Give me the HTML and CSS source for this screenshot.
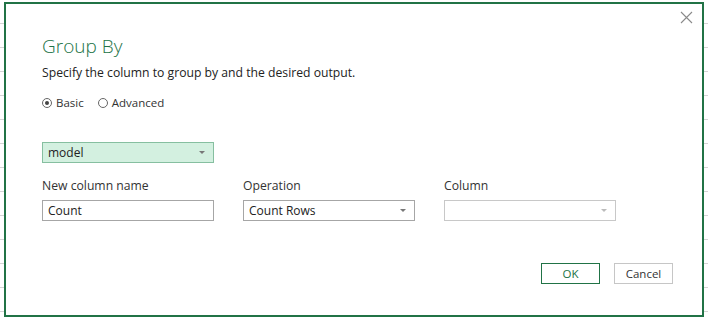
FILE: index.html
```html
<!DOCTYPE html>
<html lang="en">
<head>
    <meta charset="UTF-8">
    <title>Group By</title>
    <link rel="stylesheet" href="styles.css">
</head>
<body>
    <div class="sheet">
        <div class="dialog">
            <button class="close" aria-label="Close">
                <svg width="13" height="13" viewBox="0 0 13 13"><path d="M1 1L12 12M12 1L1 12" stroke="#8a8a8a" stroke-width="1.1" fill="none"/></svg>
            </button>
            <h1 class="title">Group By</h1>
            <p class="subtitle">Specify the column to group by and the desired output.</p>
            <div class="modes">
                <label class="radio"><span class="dot checked"></span>Basic</label>
                <label class="radio"><span class="dot"></span>Advanced</label>
            </div>

            <div class="select selected">
                <span>model</span>
                <span class="caret"></span>
            </div>

            <div class="fields">
                <div class="field">
                    <div class="label">New column name</div>
                    <div class="input">Count</div>
                </div>
                <div class="field">
                    <div class="label">Operation</div>
                    <div class="select">
                        <span>Count Rows</span>
                        <span class="caret"></span>
                    </div>
                </div>
                <div class="field">
                    <div class="label">Column</div>
                    <div class="select disabled">
                        <span></span>
                        <span class="caret"></span>
                    </div>
                </div>
            </div>

            <div class="actions">
                <button class="btn primary">OK</button>
                <button class="btn">Cancel</button>
            </div>
        </div>
    </div>
</body>
</html>
```

FILE: styles.css
```css
body {
    margin: 0;
    font-family: 'Open Sans', sans-serif;
    color: #333;
    background: #fff;
}
.sheet {
    height: 318px;
    padding: 2px 4px 0 4px;
    box-sizing: border-box;
    background:
        repeating-linear-gradient(to bottom, transparent 0, transparent 23px, #d4d4d4 23px, #d4d4d4 24px);
}
.dialog {
    position: relative;
    width: 700px;
    height: 315px;
    box-sizing: border-box;
    border: 2px solid #217346;
    background: #fff;
    padding: 29px 0 0 36px;
}
.close {
    position: absolute;
    top: 7px;
    right: 9px;
    border: none;
    background: none;
    padding: 0;
    width: 13px;
    height: 13px;
}
.close svg {
    display: block;
}
.title {
    margin: 0;
    font-weight: 300;
    font-size: 19px;
    line-height: 26px;
    color: #217346;
}
.subtitle {
    margin: 5px 0 0;
    font-size: 12.2px;
    line-height: 17px;
    color: #222;
}
.modes {
    display: flex;
    gap: 14px;
    margin-top: 14px;
    font-size: 11.5px;
    line-height: 16px;
    color: #333;
}
.radio {
    display: flex;
    align-items: center;
    gap: 4px;
}
.dot {
    width: 8px;
    height: 8px;
    border: 1px solid #666;
    border-radius: 50%;
    position: relative;
}
.dot.checked::after {
    content: '';
    position: absolute;
    left: 2px;
    top: 2px;
    width: 4px;
    height: 4px;
    border-radius: 50%;
    background: #444;
}
.select,
.input {
    width: 172px;
    height: 21px;
    box-sizing: border-box;
    border: 1px solid #a6a6a6;
    display: flex;
    align-items: center;
    justify-content: space-between;
    padding: 0 8px 0 5px;
    font-size: 12px;
    color: #222;
}
.select.selected {
    margin-top: 31px;
    background: #d3f0e0;
    border-color: #86bfa0;
}
.select.disabled {
    border-color: #c8c8c8;
}
.caret {
    width: 0;
    height: 0;
    border-left: 3px solid transparent;
    border-right: 3px solid transparent;
    border-top: 3px solid #777;
}
.disabled .caret {
    border-top-color: #bbb;
}
.fields {
    display: flex;
    gap: 29px;
    margin-top: 14px;
}
.label {
    font-size: 12.2px;
    line-height: 17px;
    color: #333;
    margin-bottom: 6px;
}
.actions {
    display: flex;
    justify-content: flex-end;
    gap: 14px;
    margin: 42px 29px 0 0;
}
.btn {
    width: 59px;
    height: 21px;
    font-family: inherit;
    font-size: 11.5px;
    color: #333;
    background: #fff;
    border: 1px solid #c6c6c6;
    padding: 0;
}
.btn.primary {
    border-color: #217346;
    color: #217346;
}
```
